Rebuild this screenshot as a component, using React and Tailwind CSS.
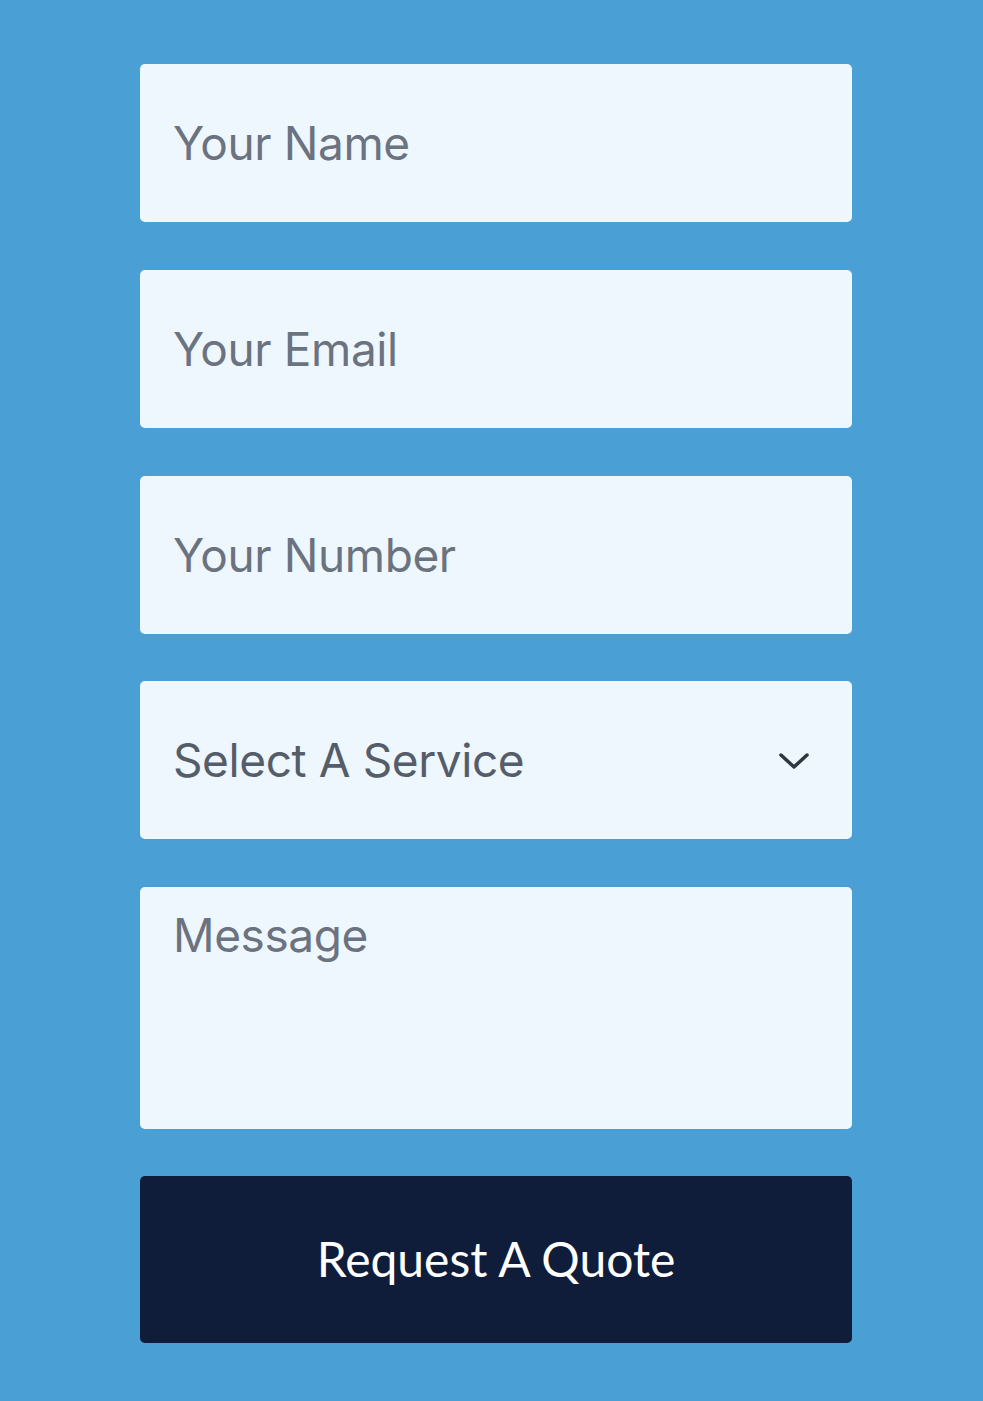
export default function App() {
  const field =
    "w-full h-[158px] rounded-[5px] bg-[#eff7fe] px-[33px] text-[46px] tracking-[-0.4px] text-[#6b7380] placeholder:text-[#6b7380] outline-none";
  return (
    <div className="min-h-[1401px] w-full bg-[#4aa0d5] pt-[64px]" style={{ fontFamily: "Inter, 'Liberation Sans', sans-serif" }}>
      <form className="ml-[140px] w-[712px] flex flex-col">
        <input className={field} placeholder="Your Name" />
        <input className={field + " mt-[48px]"} placeholder="Your Email" />
        <input className={field + " mt-[48px]"} placeholder="Your Number" />
        <div className="relative mt-[47px] h-[158px] w-full rounded-[5px] bg-[#eff7fe] flex items-center px-[33px]">
          <span className="text-[46px] tracking-[-0.4px] text-[#555d6a]">Select A Service</span>
          <svg className="absolute right-[42px] top-1/2 -translate-y-1/2" width="32" height="22" viewBox="0 0 32 22" fill="none">
            <path d="M3 6 L16 18 L29 6" stroke="#2f3640" strokeWidth="3.5" strokeLinecap="round" strokeLinejoin="round" />
          </svg>
        </div>
        <textarea
          className="mt-[48px] w-full h-[242px] rounded-[5px] bg-[#eff7fe] px-[33px] pt-[19px] text-[46px] tracking-[-0.4px] leading-[1.3] text-[#6b7380] placeholder:text-[#6b7380] outline-none resize-none"
          placeholder="Message"
        />
        <button
          type="button"
          className="mt-[47px] w-full h-[167px] rounded-[5px] bg-[#0f1d3a] text-white text-[48px] pb-[2px]"
          style={{ fontFamily: "Lato, 'Noto Sans', sans-serif" }}
        >
          Request A Quote
        </button>
      </form>
    </div>
  );
}
